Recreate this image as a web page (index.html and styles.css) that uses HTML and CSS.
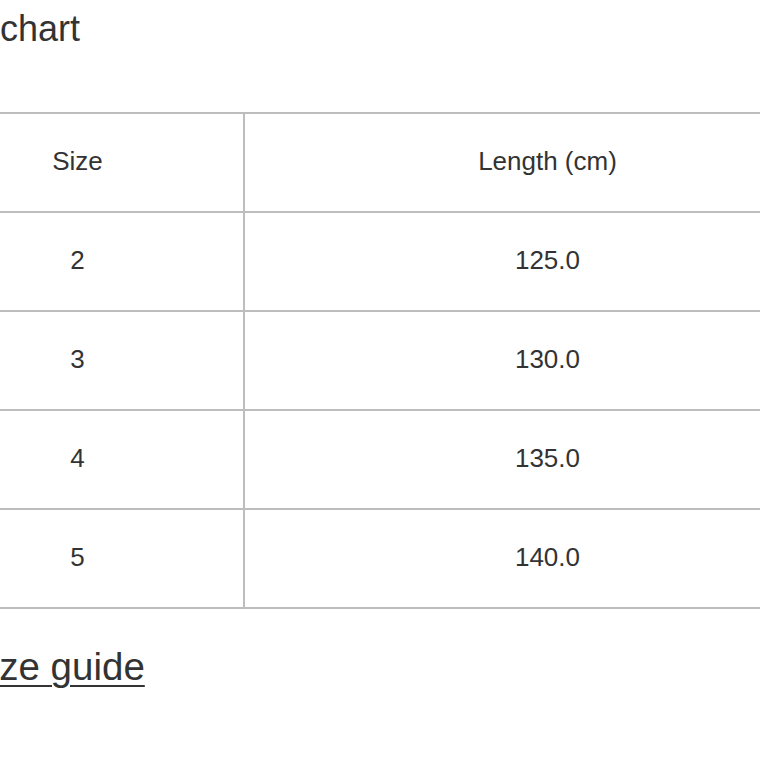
FILE: index.html
```html
<!DOCTYPE html>
<html>
<head>
<meta charset="utf-8">
<link rel="stylesheet" href="styles.css">
</head>
<body>
<div class="page">
  <h1 class="title">Size chart</h1>
  <table class="chart">
    <thead>
      <tr><th class="c-size">Size</th><th class="c-len">Length (cm)</th></tr>
    </thead>
    <tbody>
      <tr><td class="c-size">2</td><td class="c-len">125.0</td></tr>
      <tr><td class="c-size">3</td><td class="c-len">130.0</td></tr>
      <tr><td class="c-size">4</td><td class="c-len">135.0</td></tr>
      <tr><td class="c-size">5</td><td class="c-len">140.0</td></tr>
    </tbody>
  </table>
  <a class="guide" href="#">Size guide</a>
</div>
</body>
</html>
```
FILE: styles.css
```css
html, body {
  margin: 0;
  padding: 0;
  background: #fff;
  overflow: hidden;
}
body {
  font-family: "Liberation Sans", Arial, sans-serif;
  color: #333;
}
.page {
  margin-left: -90px;
  width: 942px;
  padding-top: 8px;
}
.title {
  margin: 0 0 0 10px;
  font-size: 36px;
  font-weight: normal;
  line-height: 41px;
  color: #333;
}
.chart {
  margin-top: 63px;
  width: 942px;
  border-collapse: collapse;
  table-layout: fixed;
}
.chart th, .chart td {
  border: 2px solid #bdbdbd;
  height: 95px;
  padding: 0 0 2px 0;
  text-align: center;
  vertical-align: middle;
  font-size: 26px;
  font-weight: normal;
  color: #333;
}
.c-size { width: 331px; }
.guide {
  display: inline-block;
  margin: 36px 0 0 55px;
  font-size: 38.5px;
  line-height: 44px;
  color: #333;
  text-decoration: underline;
  text-decoration-thickness: 2px;
  text-underline-offset: 5px;
}
```
